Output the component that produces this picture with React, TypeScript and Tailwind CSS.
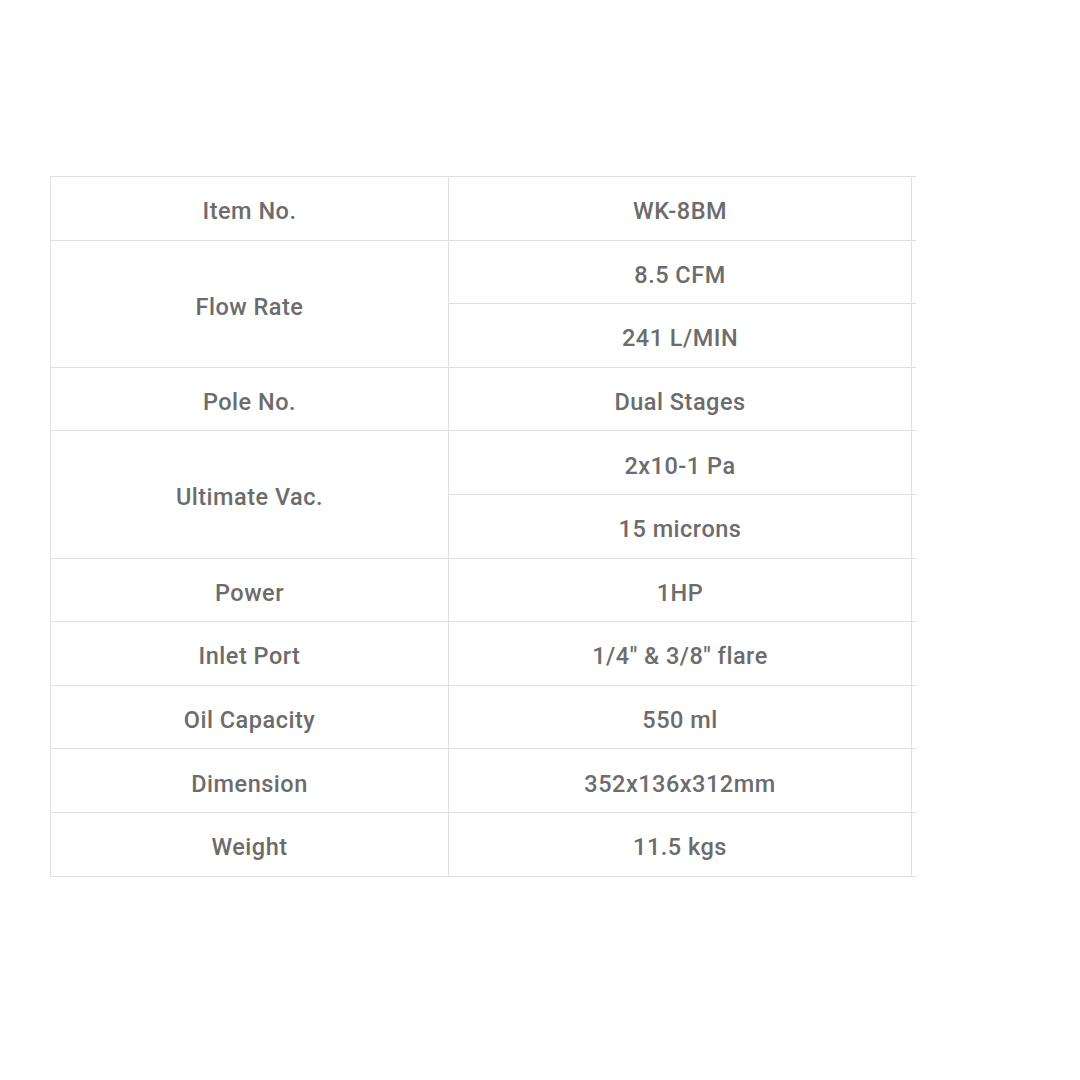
import React from "react";

type Row = { label: string; values: string[] };

const rows: Row[] = [
  { label: "Item No.", values: ["WK-8BM"] },
  { label: "Flow Rate", values: ["8.5 CFM", "241 L/MIN"] },
  { label: "Pole No.", values: ["Dual Stages"] },
  { label: "Ultimate Vac.", values: ["2x10-1 Pa", "15 microns"] },
  { label: "Power", values: ["1HP"] },
  { label: "Inlet Port", values: ['1/4" & 3/8" flare'] },
  { label: "Oil Capacity", values: ["550 ml"] },
  { label: "Dimension", values: ["352x136x312mm"] },
  { label: "Weight", values: ["11.5 kgs"] },
];

export default function App() {
  return (
    <div
      className="w-[1080px] h-[1080px] bg-white pt-[176px] pl-[50px]"
      style={{ fontFamily: "Roboto, 'Liberation Sans', sans-serif" }}
    >
      <div className="w-[866px] border-t border-[#e0e0e0] flex flex-col">
        {rows.map((r) => (
          <div key={r.label} className="flex">
            <div className="w-[399px] border-l border-r border-b border-[#e0e0e0] flex items-center justify-center pt-[7px] text-[23.5px] tracking-[0.5px] font-medium text-[#6c6c6c]">
              {r.label}
            </div>
            <div className="flex flex-col">
              {r.values.map((v) => (
                <div key={v} className="flex h-[63.6px]">
                  <div className="w-[463px] border-r border-b border-[#e0e0e0] flex items-center justify-center pt-[7px] text-[23.5px] tracking-[0.5px] font-medium text-[#6c6c6c]">
                    {v}
                  </div>
                  <div className="w-[4px] border-b border-[#e0e0e0]" />
                </div>
              ))}
            </div>
          </div>
        ))}
      </div>
    </div>
  );
}
